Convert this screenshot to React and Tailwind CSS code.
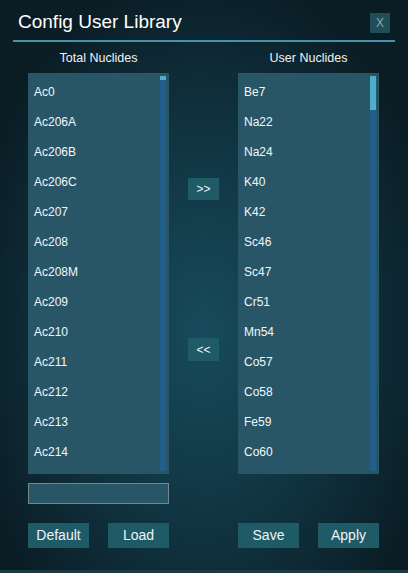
export default function App() {
  const left = ["Ac0","Ac206A","Ac206B","Ac206C","Ac207","Ac208","Ac208M","Ac209","Ac210","Ac211","Ac212","Ac213","Ac214"];
  const right = ["Be7","Na22","Na24","K40","K42","Sc46","Sc47","Cr51","Mn54","Co57","Co58","Fe59","Co60"];
  const List = ({ items, thumbH }) => (
    <div className="flex w-[141px] h-[401px] bg-[#285667]">
      <div className="flex-1 flex flex-col pt-[4px] pl-[6px]">
        {items.map((t) => (
          <div key={t} className="h-[30px] flex items-center text-[12px] text-[#f2f6f8]">{t}</div>
        ))}
      </div>
      <div className="w-[6px] mt-[3px] mb-[3px] mr-[3px] bg-[#225e8c] flex flex-col">
        <div className={`w-full bg-[#4cafcc] ${thumbH}`} />
      </div>
    </div>
  );
  const Btn = ({ children }) => (
    <div className="w-[61px] h-[25px] bg-[#1f5a67] flex items-center justify-center text-[14px] text-[#f0f4f6]">{children}</div>
  );
  return (
    <div className="w-[408px] h-[573px] overflow-hidden flex flex-col bg-[radial-gradient(ellipse_60%_65%_at_50%_58%,#174b5b_0%,#103340_55%,#0a1c24_100%)] [font-family:Liberation_Sans,Arial,sans-serif] border-b-[3px] border-[#1d3a44]">
      <div className="flex items-start justify-between pl-[18px] pr-[18px] pt-[9px]">
        <div className="text-[19px] leading-[26px] text-white">Config User Library</div>
        <div className="mt-[4px] w-[20px] h-[20px] bg-[#1f4d58] flex items-center justify-center text-[12px] text-[#8fa9b2]">X</div>
      </div>
      <div className="mx-[13px] mt-[5px] h-[2px] bg-[#4b8fae]" />
      <div className="flex pl-[28px] mt-[9px]">
        <div className="flex flex-col w-[141px]">
          <div className="text-center text-[12.5px] leading-[14px] text-[#f0f4f6]">Total Nuclides</div>
          <div className="mt-[8px]"><List items={left} thumbH="h-[4px]" /></div>
          <div className="mt-[9px] h-[21px] w-[141px] bg-[#285667] border border-[#75868d]" />
        </div>
        <div className="w-[69px] flex flex-col items-center">
          <div className="mt-[127px] w-[31px] h-[22px] bg-[#1f5a67] flex items-center justify-center text-[12px] text-[#f0f4f6]">&gt;&gt;</div>
          <div className="mt-[138px] w-[31px] h-[23px] bg-[#1f5a67] flex items-center justify-center text-[12px] text-[#f0f4f6]">&lt;&lt;</div>
        </div>
        <div className="flex flex-col w-[141px]">
          <div className="text-center text-[12.5px] leading-[14px] text-[#f0f4f6]">User Nuclides</div>
          <div className="mt-[8px]"><List items={right} thumbH="h-[34px]" /></div>
        </div>
      </div>
      <div className="flex pl-[28px] mt-[19px]">
        <Btn>Default</Btn>
        <div className="ml-[19px]"><Btn>Load</Btn></div>
        <div className="ml-[69px]"><Btn>Save</Btn></div>
        <div className="ml-[19px]"><Btn>Apply</Btn></div>
      </div>
    </div>
  );
}
